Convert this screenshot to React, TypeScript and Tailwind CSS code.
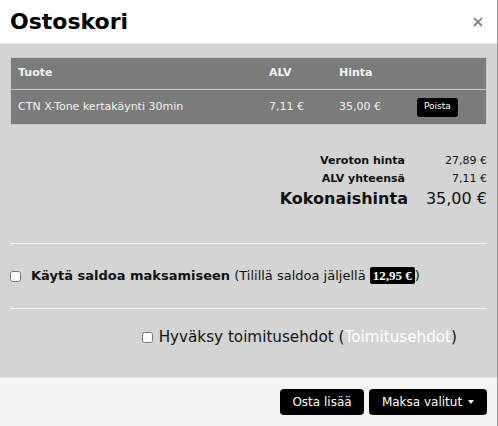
import { X } from "lucide-react";

export default function App() {
  return (
    <div className="w-[498px] h-[426px] flex flex-col bg-white border-r border-[#9a9a9a] font-['DejaVu_Sans',Verdana,sans-serif] text-[#111]">
      {/* otsikko */}
      <div className="h-[44px] shrink-0 flex items-center justify-between px-[10px] border-b border-[#e3e3e3]">
        <h1 className="text-[22px] font-bold leading-none text-black">Ostoskori</h1>
        <X size={14} strokeWidth={3.2} className="text-[#8a8a8a] mr-[2px]" />
      </div>

      {/* runko */}
      <div className="flex-1 bg-[#d4d4d4] px-[10px] pt-[13px]">
        <div className="bg-[#7b7b7b] border border-[#c9c9c9] text-[11px] text-[#f2f2f2]">
          <div className="h-[32px] flex items-center font-bold border-b border-[#c9c9c9]">
            <div className="w-[258px] pl-[7px]">Tuote</div>
            <div className="w-[70px]">ALV</div>
            <div className="w-[78px]">Hinta</div>
            <div className="flex-1"></div>
          </div>
          <div className="h-[34px] flex items-center">
            <div className="w-[258px] pl-[7px]">CTN X-Tone kertakäynti 30min</div>
            <div className="w-[70px]">7,11 €</div>
            <div className="w-[78px]">35,00 €</div>
            <div className="flex-1">
              <button className="bg-black text-white text-[9px] rounded-[3px] h-[19px] px-[7px]">Poista</button>
            </div>
          </div>
        </div>

        <div className="mt-[27px] flex justify-end gap-[28px] text-[11px]">
          <div className="flex flex-col items-end font-bold">
            <div className="h-[18px] leading-[18px]">Veroton hinta</div>
            <div className="h-[18px] leading-[18px]">ALV yhteensä</div>
          </div>
          <div className="flex flex-col items-end w-[54px]">
            <div className="h-[18px] leading-[18px]">27,89 €</div>
            <div className="h-[18px] leading-[18px]">7,11 €</div>
          </div>
        </div>
        <div className="flex justify-end items-center gap-[18px] text-[16px] leading-[22px]">
          <span className="font-bold">Kokonaishinta</span>
          <span>35,00 €</span>
        </div>

        <div className="mt-[33px] border-t border-[#f2f2f2]" />
        <div className="h-[64px] flex items-center gap-[10px] text-[13px]">
          <input type="checkbox" className="w-[11px] h-[11px] m-0" />
          <span>
            <b>Käytä saldoa maksamiseen</b> (Tilillä saldoa jäljellä{" "}
            <span className="bg-black text-white font-bold font-['Liberation_Serif',serif] text-[13px] rounded-[2px] px-[3px] py-[1px]">12,95 €</span>)
          </span>
        </div>
        <div className="border-t border-[#f2f2f2]" />

        <div className="h-[57px] flex items-center justify-end pr-[30px] gap-[6px] text-[15.2px]">
          <input type="checkbox" className="w-[11px] h-[11px] m-0" />
          <span>
            Hyväksy toimitusehdot (<span className="text-white">Toimitusehdot</span>)
          </span>
        </div>
      </div>

      {/* alapalkki */}
      <div className="h-[49px] shrink-0 bg-[#f5f5f5] border-t border-[#e8e8e8] flex items-center justify-end gap-[5px] px-[10px]">
        <button className="bg-black text-white text-[12px] rounded-[4px] h-[26px] w-[84px]">Osta lisää</button>
        <button className="bg-black text-white text-[12px] rounded-[4px] h-[26px] w-[118px] flex items-center justify-center gap-[6px]">
          Maksa valitut
          <span className="inline-block w-0 h-0 border-l-[3px] border-r-[3px] border-t-[4px] border-l-transparent border-r-transparent border-t-white" />
        </button>
      </div>
    </div>
  );
}
